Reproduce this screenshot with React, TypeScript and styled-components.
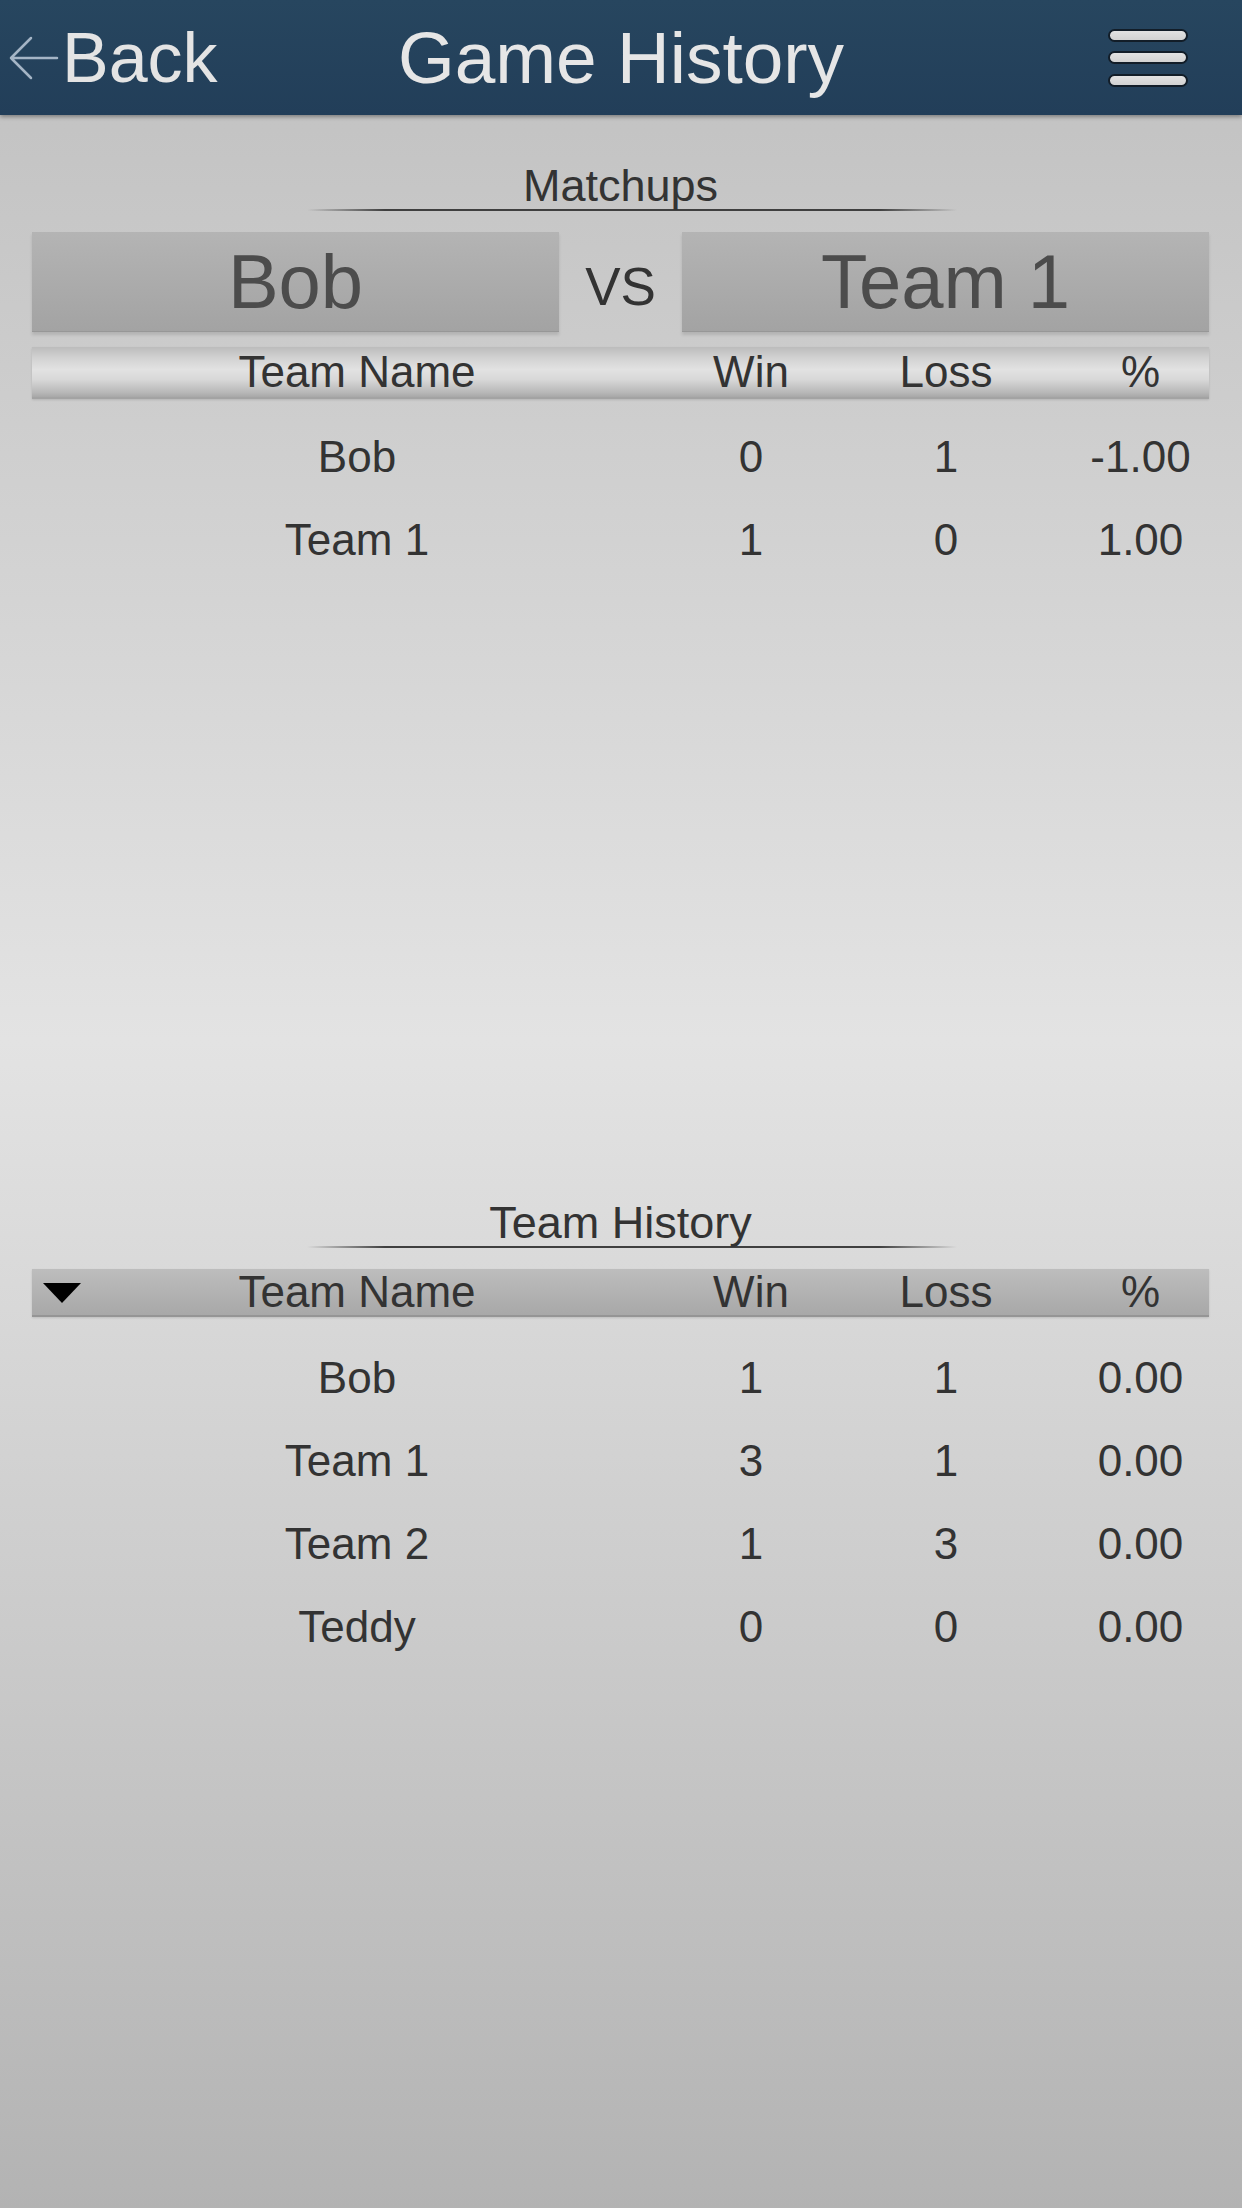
import styled, { createGlobalStyle } from 'styled-components';

const GlobalStyle = createGlobalStyle`
  html, body {
    margin: 0;
    padding: 0;
  }
  body {
    font-family: 'Liberation Sans', Arial, sans-serif;
  }
`;

const Page = styled.div`
  width: 1242px;
  min-height: 2208px;
  background: linear-gradient(
    to bottom,
    #c2c2c2 0px,
    #c4c4c4 130px,
    #e3e3e3 1040px,
    #b3b3b3 2208px
  );
  overflow: hidden;
`;

const TopBar = styled.header`
  position: relative;
  z-index: 1;
  height: 115px;
  display: grid;
  grid-template-columns: 1fr auto 1fr;
  align-items: center;
  background: linear-gradient(#27465f, #223e59);
  box-shadow: 0 2px 4px rgba(0, 0, 0, 0.35);
`;

const BackButton = styled.div`
  display: flex;
  align-items: center;
  gap: 3px;
  padding-left: 9px;
  color: #e4e4e4;
  font-size: 70px;
  line-height: 70px;
`;

const Title = styled.h1`
  margin: 0;
  font-weight: normal;
  font-size: 73px;
  line-height: 73px;
  color: #e6e6e6;
`;

const Menu = styled.div`
  justify-self: end;
  margin-right: 54px;
  display: flex;
  flex-direction: column;
  gap: 9.5px;
`;

const MenuBar = styled.span`
  display: block;
  box-sizing: border-box;
  width: 80px;
  height: 13px;
  border: 2px solid #121d28;
  border-radius: 7px;
  background: linear-gradient(#e2e2e2, #d2d2d2);
`;

const Content = styled.main`
  padding: 0 33px 0 32px;
`;

const SectionTitle = styled.h2<{ $top: number }>`
  margin: ${(p) => p.$top}px 0 0;
  font-weight: normal;
  font-size: 45px;
  line-height: 46px;
  text-align: center;
  color: #333;
`;

const TitleRule = styled.div`
  width: 650px;
  height: 2px;
  margin-left: 275px;
  background: linear-gradient(
    to right,
    rgba(60, 60, 60, 0),
    #3f3f3f 12%,
    #3f3f3f 88%,
    rgba(60, 60, 60, 0)
  );
`;

const MatchupRow = styled.div`
  display: flex;
  height: 100px;
  margin-top: 21px;
`;

const TeamBox = styled.div`
  flex: 0 0 527px;
  display: flex;
  align-items: center;
  justify-content: center;
  box-sizing: border-box;
  font-size: 76px;
  line-height: 76px;
  color: #4c4c4c;
  background: linear-gradient(#b4b4b4, #a3a3a3);
  border-bottom: 1px solid #979797;
  box-shadow: 0 3px 3px rgba(0, 0, 0, 0.12);
`;

const Versus = styled.div`
  flex: 1;
  padding-top: 9px;
  display: flex;
  align-items: center;
  justify-content: center;
  font-size: 53px;
  color: #333;
`;

const columns = '650px 138px 252px 1fr';

const TableHead = styled.div<{ $dark?: boolean; $top: number; $height: number }>`
  display: grid;
  grid-template-columns: ${columns};
  align-items: center;
  height: ${(p) => p.$height}px;
  margin-top: ${(p) => p.$top}px;
  box-sizing: border-box;
  background: ${(p) =>
    p.$dark
      ? 'linear-gradient(#bdbdbd, #a8a8a8)'
      : 'linear-gradient(#bcbcbc 0%, #d2d2d2 22%, #e2e2e2 45%, #d8d8d8 65%, #b9b9b9 90%, #a8a8a8 100%)'};
  border-bottom: 2px solid ${(p) => (p.$dark ? '#959595' : '#a3a3a3')};
  box-shadow: 0 1px 2px rgba(0, 0, 0, 0.12);
`;

const HeadCell = styled.div`
  position: relative;
  text-align: center;
  font-size: 44px;
  line-height: 44px;
  color: #333;
`;

const SortArrow = styled.span`
  position: absolute;
  left: 11px;
  top: 50%;
  margin-top: -9px;
  width: 0;
  height: 0;
  border-left: 19.5px solid transparent;
  border-right: 19.5px solid transparent;
  border-top: 20px solid #000;
`;

const Rows = styled.div<{ $top: number }>`
  margin-top: ${(p) => p.$top}px;
`;

const Row = styled.div`
  display: grid;
  grid-template-columns: ${columns};
  align-items: center;
  height: 83px;
  font-size: 44px;
  line-height: 44px;
  color: #333;
`;

const Cell = styled.div`
  text-align: center;
`;

type Stat = { name: string; win: number; loss: number; pct: string };

const matchup: Stat[] = [
  { name: 'Bob', win: 0, loss: 1, pct: '-1.00' },
  { name: 'Team 1', win: 1, loss: 0, pct: '1.00' },
];

const history: Stat[] = [
  { name: 'Bob', win: 1, loss: 1, pct: '0.00' },
  { name: 'Team 1', win: 3, loss: 1, pct: '0.00' },
  { name: 'Team 2', win: 1, loss: 3, pct: '0.00' },
  { name: 'Teddy', win: 0, loss: 0, pct: '0.00' },
];

const BackArrow = () => (
  <svg width="50" height="44" viewBox="0 0 50 44" fill="none">
    <path
      d="M2 22 H48 M2 22 L22 2 M2 22 L22 42"
      stroke="#a5b5c6"
      strokeWidth="2.5"
      strokeLinecap="round"
    />
  </svg>
);

const StatRows = ({ data, top }: { data: Stat[]; top: number }) => (
  <Rows $top={top}>
    {data.map((s) => (
      <Row key={s.name}>
        <Cell>{s.name}</Cell>
        <Cell>{s.win}</Cell>
        <Cell>{s.loss}</Cell>
        <Cell>{s.pct}</Cell>
      </Row>
    ))}
  </Rows>
);

export default function App() {
  return (
    <Page>
      <GlobalStyle />
      <TopBar>
        <BackButton>
          <BackArrow />
          Back
        </BackButton>
        <Title>Game History</Title>
        <Menu>
          <MenuBar />
          <MenuBar />
          <MenuBar />
        </Menu>
      </TopBar>

      <Content>
        <SectionTitle $top={48}>Matchups</SectionTitle>
        <TitleRule />
        <MatchupRow>
          <TeamBox>Bob</TeamBox>
          <Versus>VS</Versus>
          <TeamBox>Team 1</TeamBox>
        </MatchupRow>
        <TableHead $top={15} $height={52}>
          <HeadCell>Team Name</HeadCell>
          <HeadCell>Win</HeadCell>
          <HeadCell>Loss</HeadCell>
          <HeadCell>%</HeadCell>
        </TableHead>
        <StatRows data={matchup} top={16} />

        <SectionTitle $top={619}>Team History</SectionTitle>
        <TitleRule />
        <TableHead $dark $top={21} $height={48}>
          <HeadCell>
            <SortArrow />
            Team Name
          </HeadCell>
          <HeadCell>Win</HeadCell>
          <HeadCell>Loss</HeadCell>
          <HeadCell>%</HeadCell>
        </TableHead>
        <StatRows data={history} top={19} />
      </Content>
    </Page>
  );
}
